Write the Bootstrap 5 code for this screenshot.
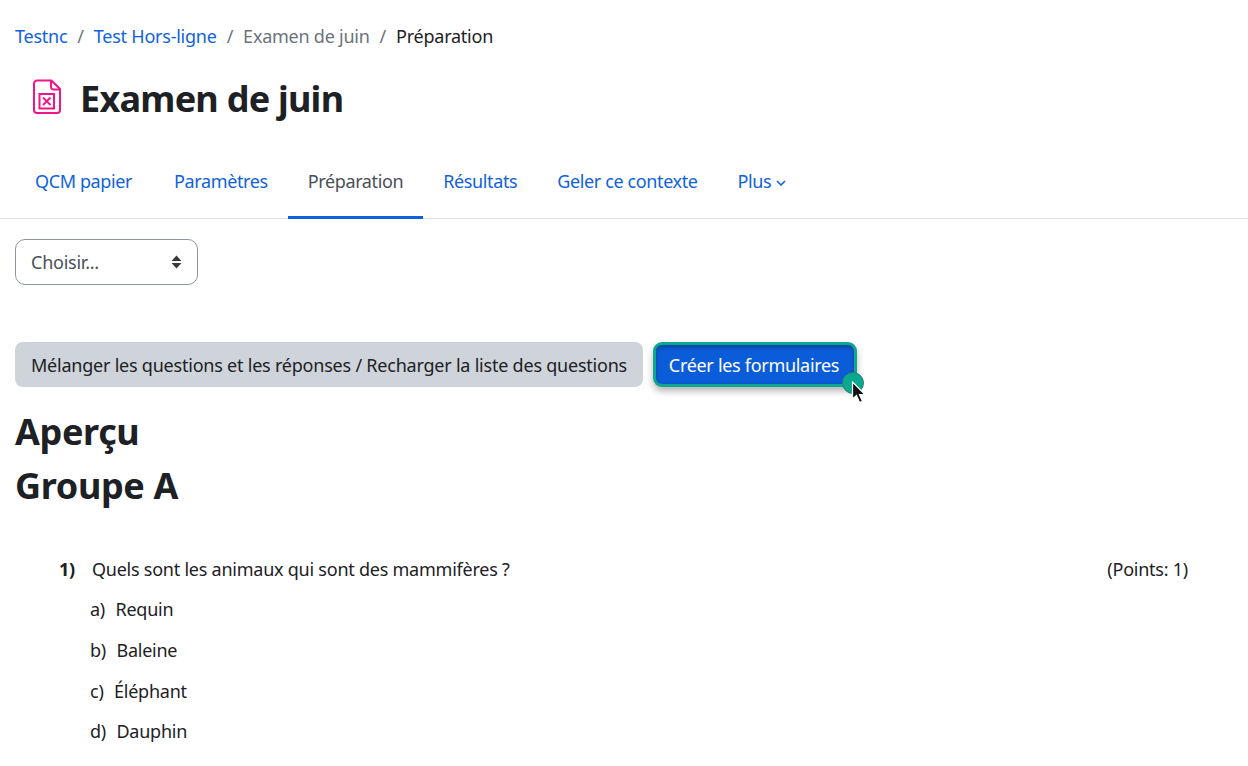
<!DOCTYPE html>
<html lang="fr"><head><meta charset="utf-8"><title>Préparation</title>
<link href="https://cdn.jsdelivr.net/npm/bootstrap@5.3.0/dist/css/bootstrap.min.css" rel="stylesheet">
<style>
html,body{height:766px;overflow:hidden}
body{font-family:"Noto Sans","Open Sans",sans-serif;font-size:18px;color:#1d2125;letter-spacing:-.24px;background:#fff}
a{color:#0f62dc;text-decoration:none}
.crumbs{padding:0 15px;height:28px;margin:22px 0 0;line-height:28px;--bs-breadcrumb-divider-color:#6a737b;--bs-breadcrumb-item-padding-x:10px;--bs-breadcrumb-margin-bottom:0;flex-wrap:nowrap}
.crumbs a{color:#0f62dc}
.crumbs .muted-item{color:#6a737b}
.crumbs .breadcrumb-item.active{color:#1d2125}
.page-head{padding:0 0 0 32px;margin-top:20px;height:58px;gap:18px}
.page-head svg{margin-bottom:4px}
.page-head h1{font-size:36px;font-weight:700;margin:0;letter-spacing:-.75px}
.tabs-row{height:68px;margin-top:23px;border-bottom:1px solid #dee2e6;letter-spacing:-.38px}
.tabs-row .nav-link{height:68px;line-height:60px;padding:0 20px;color:#0f62dc}
.tabs-row .nav-link.active{color:#495057;border-bottom:3px solid #0f62dc}
.tabs-row .nav-item:first-child .nav-link{padding-left:35px;padding-right:22px}
.chev{margin-left:5px;vertical-align:2px}
.picker{width:183px;height:46px;margin:20px 0 0 15px;padding:0 15px;border:1px solid #8f959e;border-radius:10px;color:#495057;background:#fff}
.actions{margin:57px 0 0 15px;gap:10px}
.btn-mix,.btn-make{font-size:18px;border:0;white-space:nowrap}
.btn-mix{height:45px;line-height:46px;padding:0;border-radius:8px;background:#ced4da;color:#1d2125;width:628px;letter-spacing:-.22px}
.btn-make{background:#0b5cd8;color:#fff;width:198px;position:relative;border-radius:6px;box-shadow:0 0 0 3px #0aa88f,0 4px 7px 3px rgba(0,0,0,.3),inset 0 2px 4px rgba(0,0,0,.3);height:39px;line-height:40px;margin:3px 0 0 3px;padding:0 2px 0 0;letter-spacing:-.3px}
.cursor-mark{position:absolute;left:186px;top:27px;width:22px;height:22px;background:#0aa88f;border-radius:50%;border:1px solid #2b7f70}
.cursor-arrow{position:absolute;left:195px;top:36px}
.h-block{font-size:36px;font-weight:700;margin:0;line-height:54px;padding-left:15px;letter-spacing:-.35px}
.h-first{margin-top:18px}
.qline{margin:42px 60px 0 59px;height:28px;line-height:28px}
.qnum{font-weight:700;width:33px}
.opts{margin:12px 0 0 90px;padding:0;list-style:none}
.opts li{height:28px;line-height:28px;margin-bottom:12.8px}
.opts span{margin-right:6px}
</style></head>
<body>
<nav aria-label="fil d'ariane"><ol class="breadcrumb crumbs">
<li class="breadcrumb-item"><a href="#">Testnc</a></li>
<li class="breadcrumb-item"><a href="#">Test Hors-ligne</a></li>
<li class="breadcrumb-item muted-item">Examen de juin</li>
<li class="breadcrumb-item active">Préparation</li>
</ol></nav>
<div class="d-flex align-items-center page-head">
<svg width="30" height="36" viewBox="0 0 30 36" fill="none" stroke="#f2148c" stroke-width="2"><path d="M5 1.500h14.500l8.500 8.500V31a3 3 0 0 1-3 3H5a3 3 0 0 1-3-3V4.500a3 3 0 0 1 3-3z"/><path d="M19 2v6a2.500 2.500 0 0 0 2.500 2.500H28"/><rect x="7.500" y="15" width="14.500" height="14.500"/><path d="M11 18.500l7.500 7.500M18.500 18.500L11 26" stroke-width="1.800"/></svg>
<h1>Examen de juin</h1>
</div>
<ul class="nav tabs-row">
<li class="nav-item"><a class="nav-link" href="#">QCM papier</a></li>
<li class="nav-item"><a class="nav-link" href="#">Paramètres</a></li>
<li class="nav-item"><a class="nav-link active" href="#">Préparation</a></li>
<li class="nav-item"><a class="nav-link" href="#">Résultats</a></li>
<li class="nav-item"><a class="nav-link" href="#">Geler ce contexte</a></li>
<li class="nav-item"><a class="nav-link" href="#">Plus<svg class="chev" width="10" height="6" viewBox="0 0 10 6" fill="none" stroke="#0f62dc" stroke-width="1.600"><path d="M1 1l4 4 4-4"/></svg></a></li>
</ul>
<div class="d-flex align-items-center justify-content-between picker"><span>Choisir...</span>
<svg width="11" height="14" viewBox="0 0 11 14" fill="#343a40"><path d="M5.500 0.500L10.500 6H0.500zM5.500 13.500L0.500 8H10.500z"/></svg></div>
<div class="d-flex align-items-start actions">
<button class="btn-mix" type="button">Mélanger les questions et les réponses / Recharger la liste des questions</button>
<button class="btn-make" type="button">Créer les formulaires
<span class="cursor-mark"></span>
<svg class="cursor-arrow" width="16" height="24" viewBox="0 0 16 24"><path d="M1.500 1v17l4-3.500 3 7 3-1.300-3-6.700h5.500z" fill="#111" stroke="#fff" stroke-width="1.200"/></svg>
</button>
</div>
<h2 class="h-block h-first">Aperçu</h2>
<h2 class="h-block">Groupe A</h2>
<div class="d-flex qline"><span class="qnum">1)</span><span class="flex-grow-1">Quels sont les animaux qui sont des mammifères ?</span><span>(Points: 1)</span></div>
<ul class="opts">
<li><span>a)</span> Requin</li>
<li><span>b)</span> Baleine</li>
<li><span>c)</span> Éléphant</li>
<li><span>d)</span> Dauphin</li>
</ul>
</body></html>
